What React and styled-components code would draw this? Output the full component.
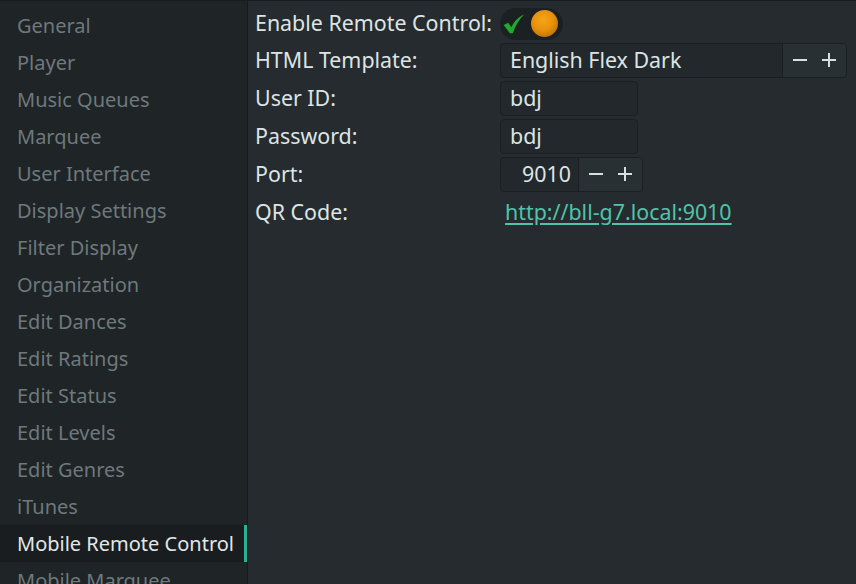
import styled, { createGlobalStyle } from 'styled-components';

const Global = createGlobalStyle`
  html, body {
    margin: 0;
    padding: 0;
    background: #252b2e;
  }
  body {
    font-family: "Noto Sans", "DejaVu Sans", sans-serif;
    font-size: 20px;
    color: #dde4e4;
  }
`;

const Window = styled.div`
  display: flex;
  width: 856px;
  height: 584px;
  overflow: hidden;
  border-top: 1px solid #181c1e;
  box-sizing: border-box;
`;

const Sidebar = styled.nav`
  width: 247px;
  flex: none;
  background: #1f2427;
  border-right: 1px solid #171b1d;
  padding-top: 6px;
  display: flex;
  flex-direction: column;
`;

const NavItem = styled.div`
  height: 37px;
  display: flex;
  align-items: center;
  padding-left: 17px;
  white-space: nowrap;
  color: ${(p) => (p.$active ? '#e2e8e8' : '#6e797c')};
  background: ${(p) => (p.$active ? '#191d1f' : 'transparent')};
  box-shadow: ${(p) => (p.$active ? 'inset -3px 0 0 #2bb18f' : 'none')};
  flex: none;
`;

const Content = styled.main`
  flex: 1;
  padding: 6px 0 0 7px;
  font-size: 21.4px;
`;

const Form = styled.div`
  display: grid;
  grid-template-columns: 245px 1fr;
  grid-auto-rows: 36px;
  grid-template-rows: 33px;
  row-gap: 2px;
  align-items: center;
`;

const Label = styled.div`
  white-space: nowrap;
  margin-top: -2px;
`;

const Cell = styled.div`
  display: flex;
  align-items: center;
  height: 100%;
`;

const Switch = styled.div`
  width: 63px;
  height: 32px;
  border-radius: 16px;
  background: #1b2023;
  display: flex;
  align-items: center;
  justify-content: space-between;
  padding: 0 5px 0 2px;
  box-sizing: border-box;
`;

const Knob = styled.div`
  width: 27px;
  height: 27px;
  border-radius: 50%;
  background: radial-gradient(circle at 45% 38%, #f7a418 0%, #e8920c 45%, #b86e06 85%, #8a5205 100%);
`;

const Entry = styled.div`
  display: flex;
  height: 35px;
  width: ${(p) => p.$w}px;
  box-sizing: border-box;
  border: 1px solid #1a1f21;
  border-radius: 4px;
  background: #22282b;
  overflow: hidden;
`;

const EntryText = styled.div`
  flex: 1;
  display: flex;
  align-items: center;
  justify-content: ${(p) => (p.$right ? 'flex-end' : 'flex-start')};
  padding: ${(p) => (p.$right ? '0 7px 0 0' : '0 0 0 9px')};
  margin-top: -2px;
`;

const Buttons = styled.div`
  display: flex;
  align-items: center;
  border-left: 1px solid #1a1f21;
  background: #283034;
  width: 64px;
  justify-content: space-around;
  padding: 0 2px;
  box-sizing: border-box;
`;

const Link = styled.a`
  color: #4fc4aa;
  text-decoration: underline;
  text-underline-offset: 3px;
  margin-left: 5px;
  margin-top: -2px;
  cursor: pointer;
`;

const Minus = () => (
  <svg width="16" height="16" viewBox="0 0 16 16">
    <path d="M1 8h14" stroke="#d8dfdf" strokeWidth="2" />
  </svg>
);

const Plus = () => (
  <svg width="16" height="16" viewBox="0 0 16 16">
    <path d="M1 8h14M8 1v14" stroke="#d8dfdf" strokeWidth="2" />
  </svg>
);

const Check = () => (
  <svg width="24" height="24" viewBox="0 0 22 22">
    <path d="M1.5 12 L5.8 9.8 L8.6 14 C11 8.8 14.6 4.6 20.5 2 C15.6 6.8 12.4 12.2 10 19.5 L7.2 19.5 Z" fill="#22a82c" />
  </svg>
);

const pages = [
  'General',
  'Player',
  'Music Queues',
  'Marquee',
  'User Interface',
  'Display Settings',
  'Filter Display',
  'Organization',
  'Edit Dances',
  'Edit Ratings',
  'Edit Status',
  'Edit Levels',
  'Edit Genres',
  'iTunes',
  'Mobile Remote Control',
  'Mobile Marquee',
];

export default function App() {
  return (
    <>
      <Global />
      <Window>
        <Sidebar>
          {pages.map((p) => (
            <NavItem key={p} $active={p === 'Mobile Remote Control'}>
              {p}
            </NavItem>
          ))}
        </Sidebar>
        <Content>
          <Form>
            <Label>Enable Remote Control:</Label>
            <Cell>
              <Switch>
                <Check />
                <Knob />
              </Switch>
            </Cell>

            <Label>HTML Template:</Label>
            <Cell>
              <Entry $w={347}>
                <EntryText>English Flex Dark</EntryText>
                <Buttons>
                  <Minus />
                  <Plus />
                </Buttons>
              </Entry>
            </Cell>

            <Label>User ID:</Label>
            <Cell>
              <Entry $w={138}>
                <EntryText>bdj</EntryText>
              </Entry>
            </Cell>

            <Label>Password:</Label>
            <Cell>
              <Entry $w={138}>
                <EntryText>bdj</EntryText>
              </Entry>
            </Cell>

            <Label>Port:</Label>
            <Cell>
              <Entry $w={143}>
                <EntryText $right>9010</EntryText>
                <Buttons>
                  <Minus />
                  <Plus />
                </Buttons>
              </Entry>
            </Cell>

            <Label>QR Code:</Label>
            <Cell>
              <Link>http://bll-g7.local:9010</Link>
            </Cell>
          </Form>
        </Content>
      </Window>
    </>
  );
}
